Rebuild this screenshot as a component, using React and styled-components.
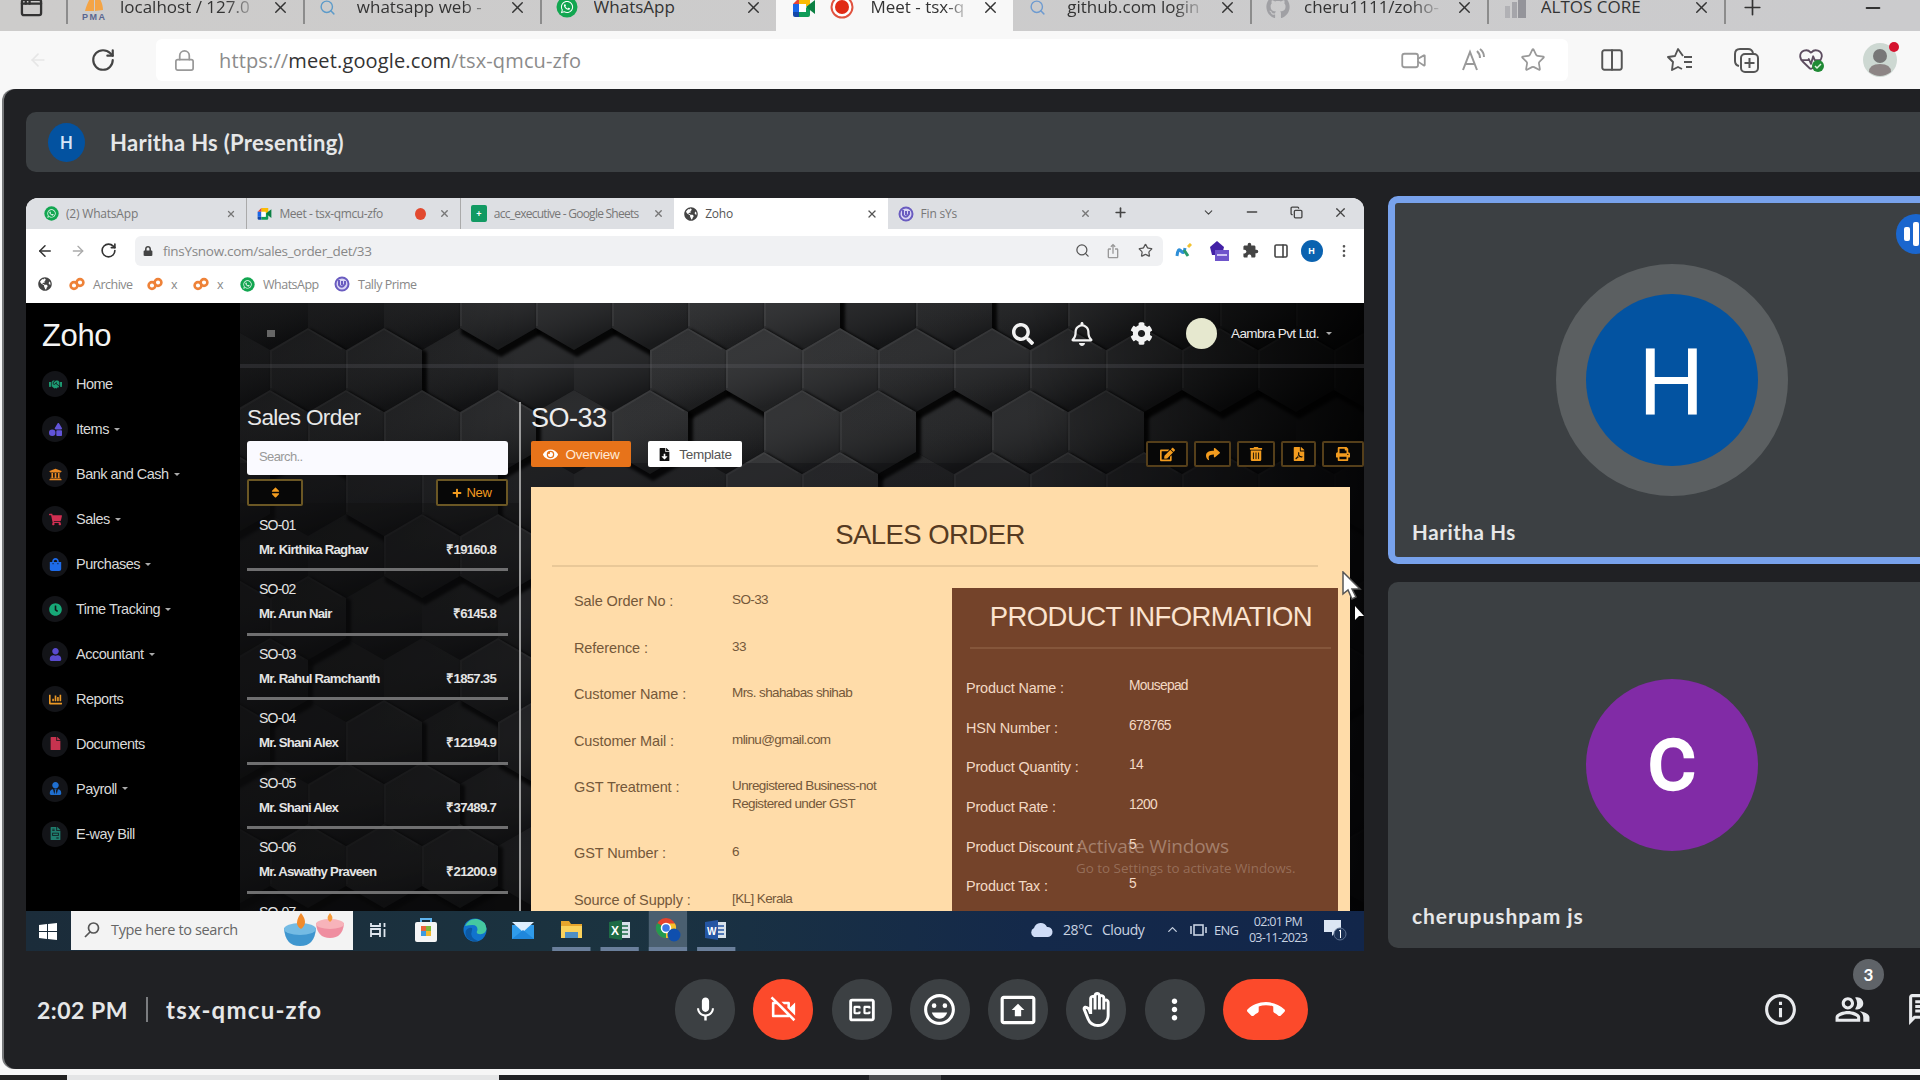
import React from "react";
import styled, { createGlobalStyle, css } from "styled-components";
import {
  MdMic, MdOutlineVideocamOff, MdOutlineClosedCaption, MdOutlineEmojiEmotions,
  MdOutlinePresentToAll, MdOutlineBackHand, MdMoreVert, MdCallEnd, MdInfoOutline,
  MdOutlinePeopleAlt, MdOutlineChat, MdExtension, MdIosShare,
} from "react-icons/md";
import {
  FaSearch, FaRegBell, FaCog, FaEdit, FaShare, FaTrashAlt, FaFilePdf, FaPrint, FaEye,
  FaFileDownload, FaPlus, FaGlobeAmericas, FaWhatsapp, FaLock, FaSort, FaGithub,
  FaHandshake, FaShapes, FaUniversity, FaShoppingCart, FaShoppingBag, FaClock, FaUser,
  FaChartBar, FaFile, FaUserTie, FaFileInvoice,
} from "react-icons/fa";
import {
  ArrowLeft, ArrowRight, RotateCw, Lock, X, Plus, Minus, Star, Video, Search,
  Columns2, PanelRight, ChevronDown, ChevronUp, Copy, HeartPulse, EllipsisVertical, AppWindow,
} from "lucide-react";

const Global = createGlobalStyle`
  * { box-sizing: border-box; }
  body { margin: 0; width: 1920px; height: 1080px; overflow: hidden; background: #fff; }
  svg { display: block; flex: none; }
`;

const ui = '"Open Sans", "Noto Sans", sans-serif';
const meet = 'Lato, "Open Sans", sans-serif';
const arial = '"Liberation Sans", Arial, sans-serif';

const Screen = styled.div`
  width: 1920px; height: 1080px; overflow: hidden; display: flex; flex-direction: column;
  background: #f8f8f8; font-family: ${ui};
`;

/* ---------- outer browser ---------- */
const TabStrip = styled.div`
  height: 31px; flex: none; display: flex; background: linear-gradient(90deg, #cdcccb, #cbcbcd);
`;
const PinnedSlot = styled.div`
  width: 66px; height: 15px; flex: none; display: flex; align-items: center; padding-left: 20px; color: #333;
`;
const Tab = styled.div`
  width: 236.8px; flex: none; height: 31px; padding: 0 13px 17px 16px; display: flex; align-items: center;
  ${(p) => p.$active
    ? css`background: #f8f8f8;`
    : css`background: linear-gradient(#8c8c8c, #8c8c8c) left top / 2px 24px no-repeat;`}
  ${(p) => p.$plain && css`background: none;`}
`;
const TabIcon = styled.div`
  width: ${(p) => p.$w || 38}px; flex: none; display: flex; gap: 14px; align-items: center;
`;
const TabTitle = styled.div`
  flex: 1; overflow: hidden; white-space: nowrap; font-size: 17px; line-height: 26px; color: #333;
  ${(p) => p.$fade && css`mask-image: linear-gradient(90deg, #000 75%, transparent 100%);`}
  margin-right: 10px;
`;
const StripTools = styled.div`
  height: 24px; padding: 0 36px 9px 14px; flex: 1; display: flex; align-items: center; justify-content: space-between;
  color: #333; border-left: 2px solid #8c8c8c;
`;
const Toolbar = styled.div`
  height: 58px; flex: none; display: flex; align-items: center; background: #f8f8f8; padding-left: 26px;
`;
const ToolSlot = styled.div`
  width: ${(p) => p.$w}px; flex: none; display: flex; justify-content: center; color: ${(p) => p.$c || "#555"};
`;
const Address = styled.div`
  width: 1412px; height: 42px; flex: none; border-radius: 6px; background: #fff; display: flex; align-items: center;
  padding: 0 6px 0 17px; color: #999;
`;
const Url = styled.div`
  flex: 1; margin-left: 23px; font-size: 20px; letter-spacing: 0.14px; color: #8b8b8b;
  b { font-weight: 400; color: #333; }
`;
const Profile = styled.div`
  width: 34px; height: 34px; border-radius: 50%; background: #cdd8d2; display: grid; place-items: center; position: relative;
`;
const AlertDot = styled.i`
  position: absolute; right: -2px; top: -1px; width: 10px; height: 10px; border-radius: 50%; background: #d5132f;
`;

/* ---------- meeting ---------- */
const Meeting = styled.div`
  margin-left: 4px; height: 980px; flex: none; background: #202124; border-radius: 12px 0 0 12px;
  display: flex; flex-direction: column; box-shadow: -2px 0 0 #77797b; overflow: hidden;
`;
const PresenterBar = styled.div`
  margin: 23px 0 0 22px; height: 60px; flex: none; background: #3c4043; border-radius: 10px 0 0 10px;
  display: flex; align-items: center; padding-left: 22px; gap: 25px;
`;
const MiniAvatar = styled.div`
  width: 37px; height: 39px; border-radius: 50%; background: #0352a0; color: #d5e5f7; display: grid; place-items: center;
  font: 500 18px Roboto, sans-serif;
`;
const MeetText = styled.div`
  font-family: ${meet}; font-weight: 700; font-size: ${(p) => p.$s || 21}px; color: #e6e7e8;
  letter-spacing: ${(p) => p.$ls || 0}px; white-space: nowrap;
`;
const Stage = styled.div`
  display: flex; gap: 24px; padding: 24px 0 0 22px; height: 779px; flex: none;
`;
const Tiles = styled.div`display: flex; flex-direction: column; gap: 18px; width: 567px; flex: none;`;
const Tile = styled.div`
  height: ${(p) => (p.$speaking ? 368 : 366)}px; background: #3c4043; border-radius: 10px; position: relative;
  border: ${(p) => (p.$speaking ? "7px solid #78a2ec" : "0")};
  display: grid; place-items: center;
`;
const Ring = styled.div`
  width: 232px; height: 232px; border-radius: 50%; display: grid; place-items: center;
  background: ${(p) => (p.$on ? "#5b5f61" : "transparent")};
`;
const Avatar = styled.div`
  width: 172px; height: 172px; border-radius: 50%; background: ${(p) => p.$c}; color: #fff; text-align: center;
  padding-top: ${(p) => p.$top}px; font: 400 93px/110px Roboto, sans-serif; -webkit-text-stroke: ${(p) => p.$stroke || 0}px #fff;
`;
const NameTag = styled.div`
  position: absolute; left: ${(p) => p.$x}px; bottom: ${(p) => p.$b}px;
`;
const AudioBadge = styled.div`
  position: absolute; left: 501px; top: 11px; width: 40px; height: 40px; border-radius: 50%; background: #1a66ce;
  display: flex; align-items: center; padding-left: 8px; gap: 3px;
`;
const Bar = styled.i`width: 6px; height: ${(p) => p.$h}px; border-radius: 2px; background: #fff;`;

const Footer = styled.div`height: 117px; margin-bottom: 1px; flex: none; display: flex; align-items: center; padding-left: 33px;`;
const ClockText = styled.div`width: 638px; flex: none; display: flex; align-items: center;`;
const Divider = styled.i`width: 2px; height: 25px; background: #7b7d80; margin: 0 18px 0 18px;`;
const Controls = styled.div`display: flex; gap: 18.3px; width: 1087px; flex: none; align-items: center;`;
const Control = styled.div`
  width: ${(p) => (p.$wide ? 85 : 60)}px; height: 61px; border-radius: 31px; display: grid; place-items: center; color: #fff;
  background: ${(p) => (p.$red ? "#fc4a2b" : "#3c4043")};
`;
const SideTools = styled.div`display: flex; gap: 35px; color: #e8eaed; width: 200px; flex: none;`;
const Counted = styled.div`position: relative;`;
const Count = styled.div`
  position: absolute; left: 19px; top: -32px; width: 31px; height: 31px; border-radius: 50%; background: #5f6368; color: #fff;
  display: grid; place-items: center; font: 700 17px ${meet};
`;
const BottomEdge = styled.div`height: 11px; flex: none; padding-top: 6px; background: #f6f6f6; display: flex;`;
const Edge = styled.i`width: ${(p) => p.$w}px; height: 5px; background: ${(p) => p.$c};`;

/* ---------- shared screen ---------- */
const Shared = styled.div`
  margin-top: 2px; width: 1338px; height: 753px; flex: none; border-radius: 12px 12px 0 0; overflow: hidden;
  display: flex; flex-direction: column; background: #fff; position: relative;
`;
const InnerTabs = styled.div`height: 31px; flex: none; display: flex; background: #dddfe3; padding-left: 8px; color: #444;`;
const InnerTab = styled.div`
  width: 213.4px; flex: none; display: flex; align-items: center; padding: 0 10px; gap: 7px; font-size: 12px; color: #777;
  ${(p) => p.$active && css`background: #fff; color: #555;`}
  ${(p) => p.$sep && css`border-right: 1px solid #aaa;`}
  span { flex: 1; overflow: hidden; white-space: nowrap; letter-spacing: ${(p) => p.$ls || -0.2}px; }
`;
const TabDot = styled.i`width: 11px; height: 12px; border-radius: 50%; background: #e2492f; margin-right: 6px;`;
const WindowTools = styled.div`flex: 1; display: flex; align-items: center; justify-content: space-between; padding: 0 16px 3px 12px;`;
const InnerNav = styled.div`height: 43px; flex: none; display: flex; align-items: center; color: #555;`;
const InnerAddress = styled.div`
  width: 1028px; height: 30px; border-radius: 6px; background: #f0f1f3; margin-left: 9px; display: flex; align-items: center;
  padding: 0 2px 0 8px; font-size: 13.500px; color: #888;
  span { flex: 1; margin-left: 10px; letter-spacing: -0.3px; }
`;
const Bookmarks = styled.div`
  height: 31px; flex: none; display: flex; align-items: center; padding: 0 0 7px 12px; font-size: 12.500px; color: #888;
`;
const Mark = styled.div`display: flex; align-items: center; gap: 8px; width: ${(p) => p.$w}px; letter-spacing: -0.5px; white-space: nowrap;`;
const Blob = styled.i`
  width: ${(p) => p.$w || 14}px; height: ${(p) => p.$h || 14}px; flex: none; border-radius: ${(p) => p.$r || "50%"};
  background: ${(p) => p.$c}; display: grid; place-items: center; color: #fff; font: 700 9px ${arial};
`;

const AppArea = styled.div`height: 608px; flex: none; display: flex; background: #000;`;
const Sidebar = styled.div`width: 214px; flex: none; background: #000; padding: 16px 0 0 13px; color: #ddd;`;
const Brand = styled.div`font: 400 31px/34px ${arial}; color: #f4f4f4; letter-spacing: -0.4px; margin: 0 0 9px 3px;`;
const MenuItem = styled.div`display: flex; align-items: center; height: 44.95px; font: 400 14.500px ${arial}; letter-spacing: -0.5px; color: #d9d9d9;`;
const MenuIcon = styled.div`
  width: 26px; height: 26px; border-radius: 50%; background: #131418; color: ${(p) => p.$c}; display: grid; place-items: center;
  margin: 0 8px 0 3px;
`;
const Caret = styled.i`
  width: 0; height: 0; margin-left: ${(p) => p.$m || 5}px; border: 3px solid transparent; border-top: 3px solid #aaa; border-bottom: 0;
`;
const MainArea = styled.div`
  width: 1124px; flex: none; display: grid; grid-template: 608px / 1124px; overflow: hidden;
  > * { grid-area: 1 / 1; }
`;
const MainContent = styled.div`display: flex; flex-direction: column;`;
const TopNav = styled.div`
  height: 65px; flex: none; border-bottom: 4px solid rgba(110, 110, 118, 0.22); display: flex; align-items: center;
  padding: 0 32px 0 27px; color: #f2f2f2;
`;
const Burger = styled.i`width: 8px; height: 7px; background: #666; margin-right: auto;`;
const NavSlot = styled.div`width: 59.5px; display: grid; place-items: center;`;
const Company = styled.div`width: 87px; font: 400 13.500px ${arial}; letter-spacing: -0.6px; color: #e9e9e9; white-space: nowrap;`;
const Panes = styled.div`display: flex; height: 543px;`;
const ListPane = styled.div`width: 279px; flex: none; padding: 33px 11px 0 7px; overflow: hidden;`;
const PaneTitle = styled.div`font: 400 22.500px/34px ${arial}; letter-spacing: -0.6px; color: #e8e8e8; height: 40px;`;
const SearchBox = styled.div`
  height: 34px; background: #fafaff; border-radius: 3px; font: 400 13px/32px ${arial}; letter-spacing: -0.6px; color: #999; padding-left: 12px;
`;
const Row = styled.div`display: flex; justify-content: space-between;`;
const ListButtons = styled(Row)`padding-top: 4px; height: 32px;`;
const OutlineButton = styled.div`
  width: ${(p) => p.$w}px; height: 27px; border: 2px solid #6b5724; background: #070707; color: #f39c1f; border-radius: 2px;
  display: flex; align-items: center; justify-content: center; gap: 4px; font: 400 13px ${arial}; letter-spacing: -0.3px;
`;
const Order = styled.div`
  height: 64.45px; padding: 8px 12px 0; border-bottom: 3px solid #6f6f70; color: #e4e4e4; font: 700 13.200px/20px ${arial};
  letter-spacing: -0.75px;
`;
const OrderNo = styled.div`font-weight: 400; font-size: 14px; letter-spacing: -0.8px; height: 25px;`;
const DetailPane = styled.div`
  width: 845px; flex: none; margin-top: 34px; height: 509px; border-left: 2px solid #9b9b9b; padding: 0 0 0 10px; display: flex; flex-direction: column;
`;
const OrderTitle = styled.div`font: 400 27px/32px ${arial}; color: #eee; letter-spacing: -0.5px; height: 39px;`;
const Actions = styled.div`display: flex; height: 46px; align-items: flex-start;`;
const PillButton = styled.div`
  height: 26px; width: ${(p) => p.$w}px; background: ${(p) => p.$bg}; color: ${(p) => p.$c}; border-radius: 2px; margin-right: 17px;
  display: flex; align-items: center; justify-content: center; gap: 8px; font: 400 13.500px ${arial}; letter-spacing: -0.3px;
`;
const Tools = styled.div`display: flex; gap: 6px; margin-left: auto;`;
const Tool = styled(OutlineButton)`height: 26px; border-color: #553f1a;`;
const Sheet = styled.div`width: 819px; height: 424px; background: #ffdca9; padding: 0 12px 0 21px; overflow: hidden;`;
const SheetTitle = styled.div`
  height: 80px; border-bottom: 2px solid #e9c898; margin-right: 20px; padding: 28px 10px 0 0; text-align: center; white-space: nowrap;
  font: 400 27.500px/40px ${arial}; letter-spacing: -0.55px; color: #553a22;
`;
const SheetBody = styled.div`display: flex; justify-content: space-between; padding-top: 21px;`;
const Facts = styled.div`width: 380px; font: 400 14.500px/18px ${arial}; color: #74583a;`;
const Fact = styled.div`
  display: grid; grid-template-columns: 158px 1fr; padding-left: 22px; height: ${(p) => p.$h || 46.5}px; padding-top: 4px; white-space: pre-line;
  letter-spacing: -0.1px;
  span + span { font-size: 13.500px; letter-spacing: -0.6px; margin-top: -1px; }
`;
const Product = styled.div`width: 386px; height: 323px; flex: none; background: #74432a; padding: 0 7px 0 14px; color: #f3d9c4;`;
const ProductTitle = styled.div`
  height: 61px; border-bottom: 2px solid #85563b; margin: 0 0 16px 4px; padding: 9px 19px 0 0; text-align: right; white-space: nowrap;
  font: 400 27.500px/40px ${arial}; color: #fbe3cf; letter-spacing: -0.6px;
`;
const ProductFact = styled.div`
  display: grid; grid-template-columns: 163px 1fr; height: 39.7px; padding-top: 14px; font: 400 14.400px/18px ${arial}; letter-spacing: -0.15px;
  span + span { font-size: 13.800px; letter-spacing: -0.7px; margin-top: -2px; }
`;
const Watermark = styled.div`
  position: absolute; left: 1050px; top: 635px; color: rgba(214, 190, 175, 0.5); font: 400 19px/26px ${ui}; letter-spacing: -0.2px; white-space: nowrap;
  small { display: block; font-size: 13.400px; line-height: 18px; letter-spacing: 0; color: rgba(214, 190, 175, 0.36); }
`;
const Pointer = styled.svg`position: absolute; left: ${(p) => p.$x}px; top: ${(p) => p.$y}px;`;

const Taskbar = styled.div`
  height: 40px; flex: none; background: linear-gradient(90deg, #1b2c3a 0%, #1b3340 45%, #14294a 75%, #12264a 100%); display: flex; align-items: stretch; color: #dfe6ee;
`;
const Start = styled.div`width: 45px; display: grid; place-items: center; padding-right: 2px;`;
const TaskSearch = styled.div`
  width: 282px; height: 39px; background: #f3f3f3; display: flex; align-items: center; padding: 0 9px 2px 13px; gap: 11px;
  color: #666; font-size: 14.500px; letter-spacing: -0.35px; white-space: nowrap;
  span { flex: 1; }
`;
const Apps = styled.div`display: flex; padding-left: 1px;`;
const TaskApp = styled.div`
  width: 48.300px; display: grid; place-items: center; flex: none; padding-bottom: 3px;
  ${(p) => p.$open && css`box-shadow: inset 0 -4px 0 #6a7f9b; clip-path: inset(0 5px);`}
  ${(p) => p.$focus && css`background: #4a5f70;`}
`;
const Tray = styled.div`
  margin-left: auto; width: 335px; display: flex; align-items: center; font-size: 14px; color: #c9d3e2; letter-spacing: -0.4px; white-space: nowrap;
  padding-bottom: 3px;
`;
const TraySlot = styled.div`
  width: ${(p) => p.$w}px; flex: none; display: flex; align-items: center; justify-content: ${(p) => p.$j || "flex-start"};
  ${(p) => p.$small && css`font-size: 13px; letter-spacing: -0.8px;`}
`;
const TrayClock = styled.div`width: 64px; text-align: center; font-size: 12.500px; line-height: 16px; letter-spacing: -0.7px;`;

/* ---------- drawings ---------- */
function HexWall() {
  const cells = [];
  for (let r = -1; r < 10; r++) {
    for (let c = -1; c < 16; c++) {
      const x = c * 76 + (r % 2 ? 38 : 0) + 30;
      const y = r * 62 + 5;
      const seed = Math.abs(Math.sin(r * 12.9 + c * 78.2) * 43758) % 1;
      const side = Math.max(0.3, 1 - Math.abs(x - 520) / 760);
      const v = Math.round(17 + side * (12 + seed * 14));
      cells.push({ x, y, v, deep: seed < 0.4, key: r + "_" + c });
    }
  }
  cells.sort((a, b) => (b.deep ? 1 : 0) - (a.deep ? 1 : 0));
  return (
    <svg width="1124" height="608">
      <defs>
        <linearGradient id="shade" x1="0" y1="0" x2="0.3" y2="1">
          <stop offset="0" stopColor="#fff" stopOpacity="0.04" />
          <stop offset="1" stopColor="#000" stopOpacity="0.22" />
        </linearGradient>
        <linearGradient id="dim" x1="0" x2="1">
          <stop offset="0" stopColor="#0c0c0d" stopOpacity="0.5" />
          <stop offset="0.25" stopColor="#000" stopOpacity="0" />
          <stop offset="0.7" stopColor="#000" stopOpacity="0.05" />
          <stop offset="0.88" stopColor="#000" stopOpacity="0.6" />
          <stop offset="1" stopColor="#000" stopOpacity="0.9" />
        </linearGradient>
        <filter id="soft"><feGaussianBlur stdDeviation="1.6" /></filter>
      </defs>
      <rect width="1124" height="608" fill="#0b0b0c" />
      {cells.map((h) => (
        <g key={h.key} transform={`translate(${h.x} ${h.y})`}>
          {!h.deep && <path d="M0-44L40-21V23L0 46L-40 23V-21Z" fill="#020203" transform="translate(3 3)" filter="url(#soft)" opacity="0.85" />}
          <path d="M0-42L38-20V20L0 42L-38 20V-20Z" fill={`rgb(${h.v},${h.v + 1},${h.v + 3})`} />
          <path d="M0-42L38-20V20L0 42L-38 20V-20Z" fill="url(#shade)" />
          {!h.deep && <path d="M-37 18V-19L0-41L34-21" fill="none" stroke="#fff" strokeOpacity="0.05" strokeWidth="2" />}
        </g>
      ))}
      <rect width="1124" height="608" fill="url(#dim)" />
      <rect width="1124" height="448" y="160" fill="#0a0a0c" fillOpacity="0.3" />
      <rect width="281" height="408" y="200" fill="#0d0d0f" fillOpacity="0.35" />
    </svg>
  );
}

const PhpIcon = () => (
  <svg width="24" height="28" viewBox="0 0 24 28">
    <path d="M3 18C5 10 9 3 12 0v18zM13 0c5 4 8 11 8 17l-8 1z" fill="#f4a445" />
    <text x="0" y="27" fontSize="9" fontWeight="700" fontFamily="Liberation Sans, sans-serif" fill="#5a6690" textLength="23">PMA</text>
  </svg>
);
const MeetIcon = ({ s = 24 }) => (
  <svg width={s} height={s} viewBox="0 0 24 24">
    <path d="M7 3h11v7l-5 2-6-3z" fill="#fbbc04" /><path d="M7 3v6H1z" fill="#ea4335" />
    <path d="M1 9h6v8H1z" fill="#1a66e8" /><path d="M1 17h6v5H3q-2 0-2-2z" fill="#1447a8" />
    <path d="M7 17h7v-4l4-3v10q0 2-2 2H7z" fill="#0f9d58" /><path d="M14 12l9-7v14z" fill="#0b8043" />
    <path d="M7 9h7v8H7z" fill="#fff" />
  </svg>
);
const RecordIcon = () => (
  <svg width="24" height="24"><circle cx="12" cy="12" r="10.5" fill="#fff" stroke="#e0523f" strokeWidth="2" /><circle cx="12" cy="12" r="7" fill="#e12a14" /></svg>
);
const Wa = ({ s = 22 }) => (
  <svg width={s} height={s} viewBox="0 0 22 22"><circle cx="11" cy="11" r="10.5" fill="#12a650" /><g transform="translate(4 4)"><FaWhatsapp size={14} color="#fff" /></g></svg>
);
const BarsIcon = () => (
  <svg width="24" height="26"><path d="M2 12h5v12H2z" fill="#b1b1b5" /><path d="M9 8h5v16H9z" fill="#a5a5aa" /><path d="M15 0h8v24h-8z" fill="#94949a" /></svg>
);
const ReadAloud = () => (
  <svg width="26" height="24" fill="none" stroke="#999" strokeWidth="2"><path d="M3 22L10 4l7 18M6 16h8M17 3q3 3 3 7M20 1q4 3 4 8" /></svg>
);
const Swirl = () => (
  <svg width="16" height="16" fill="none" stroke="#6a5cc0" strokeWidth="2"><circle cx="8" cy="8" r="6.5" fill="#d9d5f3" /><path d="M5 4v5q3 4 6-1V5M8 5v4" /></svg>
);
const LinkMark = () => (
  <svg width="16" height="14" fill="none" stroke="#ee8238" strokeWidth="2.6"><circle cx="5" cy="8.5" r="3.4" /><circle cx="11" cy="5.5" r="3.4" /></svg>
);
const WinLogo = () => (
  <svg width="18" height="17" fill="#fff"><path d="M0 2l8-1v7H0zM9 1l9-1v8H9zM0 9h8v7l-8-1zM9 9h9v8l-9-1z" /></svg>
);
const Bowls = () => (
  <svg width="60" height="34" viewBox="0 0 60 34">
    <path d="M32 10h28q-1 15-14 15T32 10z" fill="#ef8ea0" /><ellipse cx="46" cy="11" rx="14" ry="5" fill="#f7b3ba" />
    <path d="M46 0q5 6 0 9q-5-3 0-9z" fill="#f59b3a" />
    <path d="M0 15h32q-1 18-16 18T0 15z" fill="#3f96cf" /><ellipse cx="16" cy="16" rx="16" ry="6" fill="#74bbe4" />
    <path d="M17 0q8 10 0 16q-8-5 0-16z" fill="#f28b2c" />
  </svg>
);
const TaskView = () => (
  <svg width="17" height="16" fill="none" stroke="#dfe6ee" strokeWidth="1.8"><path d="M1 1v3h9V1M1 15v-3M10 15v-3M1 7h9v5H1zM14.500 1v4M14.500 7v8" /></svg>
);
const Store = () => (
  <svg width="24" height="26"><path d="M7 7V2h10v5" fill="none" stroke="#5fb4ef" strokeWidth="2" /><rect x="1" y="5" width="22" height="20" rx="2" fill="#f5f5f5" /><path d="M7 9h5v5H7z" fill="#e9643b" /><path d="M12 9h5v5h-5z" fill="#7eb83c" /><path d="M7 14h5v5H7z" fill="#3d9be0" /><path d="M12 14h5v5h-5z" fill="#f2b92c" /></svg>
);
const EdgeLogo = () => (
  <svg width="24" height="24"><circle cx="12" cy="12" r="11.5" fill="#1173cd" /><path d="M2 8Q6 0 14 1q9 2 9.500 10q-1 6-8 5q-3-1-1-4q0-5-5-5q-4 0-7.500 1z" fill="#45c9a0" /><path d="M9 12q-3 8 6 11q-9 1-12-5q-2-6 3-8q4-1 3 2z" fill="#0c59a4" /></svg>
);
const Mail = () => (
  <svg width="24" height="20"><path d="M1 5h22v14H1z" fill="#2f9bea" /><path d="M1 2h22L12 12z" fill="#dff0ff" /><path d="M1 19L12 10l11 9z" fill="#1f87dc" /></svg>
);
const Folder = () => (
  <svg width="23" height="19"><path d="M1 1h8l2 3h11v14H1z" fill="#e7a52c" /><path d="M1 6h21v12H1z" fill="#fbd25c" /><path d="M5 12h13v6H5z" fill="#4f8fc4" /></svg>
);
const OfficeIcon = ({ c, t }) => (
  <svg width="22" height="20"><rect x="10" y="2" width="11" height="16" fill="#d8e2ea" /><path d="M13 6h6M13 10h6M13 14h6" stroke={c} strokeWidth="1.500" /><path d="M0 2l13-2v20L0 18z" fill={c} /><text x="2" y="15" fontSize={t === "W" ? 10 : 12} fontWeight="700" fontFamily="Liberation Sans, sans-serif" fill="#fff">{t}</text></svg>
);
const Chrome = () => (
  <svg width="26" height="26" viewBox="0 0 26 26"><circle cx="11" cy="11" r="10" fill="#e5432d" /><path d="M11 11L2.300 6A10 10 0 0 0 11 21z" fill="#239a50" /><path d="M11 11v10A10 10 0 0 0 20 6.500H11z" fill="#f7c22c" /><circle cx="11" cy="11" r="4.500" fill="#3b78e7" stroke="#fff" strokeWidth="1.500" /><circle cx="19" cy="18" r="6.500" fill="#0f4fae" /></svg>
);
const Cloud = () => (
  <svg width="24" height="15"><path d="M5 15a5 5 0 0 1 0-9a7 7 0 0 1 13-1a5 5 0 0 1 1 10z" fill="#cfdcf6" /></svg>
);
const Notice = () => (
  <svg width="24" height="24"><path d="M1 2h17v12h-5l-4 4v-4H1z" fill="#dce6f4" /><circle cx="17" cy="16" r="6" fill="#1a3054" stroke="#5d7090" /><path d="M16 13l1.500-1v8" stroke="#fff" fill="none" /></svg>
);

const outerTabs = [
  { icon: <PhpIcon />, title: "localhost / 127.0", fade: true },
  { icon: <Search size={17} color="#5d9bc9" />, title: "whatsapp web -", fade: true },
  { icon: <Wa />, title: "WhatsApp" },
  { icon: <><MeetIcon /><RecordIcon /></>, title: "Meet - tsx-q", fade: true, active: true, w: 78 },
  { icon: <Search size={17} color="#6e9bd0" />, title: "github.com login", fade: true, plain: true },
  { icon: <FaGithub size={24} color="#a0a0a4" />, title: "cheru1111/zoho-", fade: true },
  { icon: <BarsIcon />, title: "ALTOS CORE" },
];

const menu = [
  ["Home", FaHandshake, "#1d9b72", 0], ["Items", FaShapes, "#6254d8", 1], ["Bank and Cash", FaUniversity, "#ee8a22", 1],
  ["Sales", FaShoppingCart, "#d12f52", 1], ["Purchases", FaShoppingBag, "#1d6bea", 1], ["Time Tracking", FaClock, "#17a877", 1],
  ["Accountant", FaUser, "#5a4bd0", 1], ["Reports", FaChartBar, "#ee9a25", 0], ["Documents", FaFile, "#c7334f", 0],
  ["Payroll", FaUserTie, "#1f6fd0", 1], ["E-way Bill", FaFileInvoice, "#1f7d6e", 0],
];

const orders = [
  ["SO-01", "Mr. Kirthika Raghav", "₹19160.8"], ["SO-02", "Mr. Arun Nair", "₹6145.8"], ["SO-03", "Mr. Rahul Ramchanth", "₹1857.35"],
  ["SO-04", "Mr. Shani Alex", "₹12194.9"], ["SO-05", "Mr. Shani Alex", "₹37489.7"], ["SO-06", "Mr. Aswathy Praveen", "₹21200.9"], ["SO-07", "", ""],
];

const facts = [
  ["Sale Order No :", "SO-33"], ["Reference :", "33"], ["Customer Name :", "Mrs. shahabas shihab"], ["Customer Mail :", "mlinu@gmail.com"],
  ["GST Treatment :", "Unregistered Business-not\nRegistered under GST", 66], ["GST Number :", "6"], ["Source of Supply :", "[KL] Kerala"],
];

const productFacts = [
  ["Product Name :", "Mousepad"], ["HSN Number :", "678765"], ["Product Quantity :", "14"],
  ["Product Rate :", "1200"], ["Product Discount :", "5"], ["Product Tax :", "5"],
];

function OuterBrowser() {
  return (
    <>
      <TabStrip>
        <PinnedSlot><AppWindow size={23} strokeWidth={2.4} /></PinnedSlot>
        {outerTabs.map((t) => (
          <Tab key={t.title} $active={t.active} $plain={t.plain}>
            <TabIcon $w={t.w}>{t.icon}</TabIcon>
            <TabTitle $fade={t.fade}>{t.title}</TabTitle>
            <X size={19} strokeWidth={1.8} color="#333" />
          </Tab>
        ))}
        <StripTools><Plus size={25} strokeWidth={1.6} /><Minus size={22} strokeWidth={2} /></StripTools>
      </TabStrip>
      <Toolbar>
        <ToolSlot $w={24} $c="#e6e6e6"><ArrowLeft size={20} /></ToolSlot>
        <ToolSlot $w={106} $c="#444"><RotateCw size={26} strokeWidth={2} /></ToolSlot>
        <Address>
          <Lock size={23} strokeWidth={1.8} />
          <Url>https://<b>meet.google.com</b>/tsx-qmcu-zfo</Url>
          <ToolSlot $w={60} $c="#999"><Video size={27} strokeWidth={1.6} /></ToolSlot>
          <ToolSlot $w={60}><ReadAloud /></ToolSlot>
          <ToolSlot $w={59} $c="#999"><Star size={26} strokeWidth={1.6} /></ToolSlot>
        </Address>
        <ToolSlot $w={87}><Columns2 size={26} strokeWidth={1.8} /></ToolSlot>
        <ToolSlot $w={50}>
          <svg width="28" height="26" fill="none" stroke="#555" strokeWidth="1.900" strokeLinejoin="round"><path d="M17 9L12 2L9 9L2 10L7 15L6 23L12 20L16 22M18 10h8M18 15h8M20 20h6" /></svg>
        </ToolSlot>
        <ToolSlot $w={82}>
          <svg width="27" height="27" fill="none" stroke="#555" strokeWidth="2"><path d="M6 19q-4-1-4-5V7q0-5 5-5h8q4 0 5 4" /><rect x="8" y="7" width="17" height="18" rx="4" /><path d="M16.500 11v10M11.500 16h10" /></svg>
        </ToolSlot>
        <ToolSlot $w={51}>
          <svg width="29" height="29"><HeartPulse size={26} strokeWidth={1.7} color="#5d4d60" /><circle cx="20" cy="20" r="6" fill="#208a35" /><path d="M17 20l2 2 4-4" stroke="#dff3e0" fill="none" strokeWidth="1.500" /></svg>
        </ToolSlot>
        <ToolSlot $w={84}>
          <Profile>
            <svg width="34" height="34"><circle cx="17" cy="13" r="7" fill="#777" /><path d="M6 29q0-8 11-8t11 8q-11 8-22 0z" fill="#8d8585" /></svg>
            <AlertDot />
          </Profile>
        </ToolSlot>
      </Toolbar>
    </>
  );
}

function InnerBrowser() {
  return (
    <>
      <InnerTabs>
        <InnerTab $sep><Wa s={15} /><span>(2) WhatsApp</span><X size={10} strokeWidth={3} /></InnerTab>
        <InnerTab $sep $ls={-0.4}><MeetIcon s={15} /><span>Meet - tsx-qmcu-zfo</span><TabDot /><X size={11} strokeWidth={3} /></InnerTab>
        <InnerTab $ls={-0.75}><Blob $c="#129a63" $r="2px" $w={16} $h={17}>+</Blob><span>acc_executive - Google Sheets</span><X size={11} strokeWidth={3} /></InnerTab>
        <InnerTab $active><FaGlobeAmericas size={14} color="#444" /><span>Zoho</span><X size={12} strokeWidth={2.6} /></InnerTab>
        <InnerTab><Swirl /><span>Fin sYs</span><X size={11} strokeWidth={3} /></InnerTab>
        <WindowTools>
          <Plus size={15} strokeWidth={2.6} />
          <ToolSlot $w={14} />
          <ChevronDown size={13} /><Minus size={16} /><Copy size={13} strokeWidth={2.4} /><X size={15} />
        </WindowTools>
      </InnerTabs>
      <InnerNav>
        <ToolSlot $w={38} $c="#333"><ArrowLeft size={18} /></ToolSlot>
        <ToolSlot $w={27} $c="#aaa"><ArrowRight size={16} /></ToolSlot>
        <ToolSlot $w={35} $c="#333"><RotateCw size={17} strokeWidth={2.3} /></ToolSlot>
        <InnerAddress>
          <FaLock size={10} color="#444" />
          <span>finsYsnow.com/sales_order_det/33</span>
          <ToolSlot $w={30}><Search size={15} /></ToolSlot>
          <ToolSlot $w={32}><MdIosShare size={16} color="#999" /></ToolSlot>
          <ToolSlot $w={32}><Star size={15} /></ToolSlot>
        </InnerAddress>
        <ToolSlot $w={40}>
          <svg width="17" height="15" fill="none" strokeWidth="3"><path d="M2 13q1-9 4-5t4-3" stroke="#2f8fd8" /><path d="M9 7l4 6" stroke="#2a9a6b" /><path d="M13 4l3-3" stroke="#f2c230" /></svg>
        </ToolSlot>
        <ToolSlot $w={32}>
          <svg width="20" height="22"><path d="M1 7L8 1l7 6-2 8H3z" fill="#4321a6" /><rect x="6" y="10" width="14" height="11" fill="#6f55cb" /><path d="M8 15h10" stroke="#cfc4f5" strokeWidth="2" /></svg>
        </ToolSlot>
        <ToolSlot $w={30} $c="#444"><MdExtension size={17} /></ToolSlot>
        <ToolSlot $w={31} $c="#444"><PanelRight size={16} strokeWidth={2.4} /></ToolSlot>
        <ToolSlot $w={31}><Blob $c="#0a62b0" $w={22} $h={22}>H</Blob></ToolSlot>
        <ToolSlot $w={33}><EllipsisVertical size={16} /></ToolSlot>
      </InnerNav>
      <Bookmarks>
        <Mark $w={31}><FaGlobeAmericas size={14} color="#444" /></Mark>
        <Mark $w={78}><LinkMark />Archive</Mark>
        <Mark $w={46}><LinkMark />x</Mark>
        <Mark $w={47}><LinkMark />x</Mark>
        <Mark $w={94}><Wa s={15} />WhatsApp</Mark>
        <Mark $w={100}><Swirl />Tally Prime</Mark>
      </Bookmarks>
    </>
  );
}

function SalesApp() {
  return (
    <AppArea>
      <Sidebar>
        <Brand>Zoho</Brand>
        {menu.map(([label, Icon, c, more]) => (
          <MenuItem key={label}><MenuIcon $c={c}><Icon size={13} /></MenuIcon>{label}{more ? <Caret /> : null}</MenuItem>
        ))}
      </Sidebar>
      <MainArea>
        <HexWall />
        <MainContent>
          <TopNav>
            <Burger />
            <NavSlot><FaSearch size={22} /></NavSlot>
            <NavSlot><FaRegBell size={24} /></NavSlot>
            <NavSlot><FaCog size={23} /></NavSlot>
            <NavSlot><Blob $c="#e6e8cf" $w={31} $h={31} /></NavSlot>
            <Company>Aambra Pvt Ltd.</Company>
            <Caret $m={8} />
          </TopNav>
          <Panes>
            <ListPane>
              <PaneTitle>Sales Order</PaneTitle>
              <SearchBox>Search..</SearchBox>
              <ListButtons>
                <OutlineButton $w={56}><FaSort size={13} /></OutlineButton>
                <OutlineButton $w={72}><FaPlus size={10} />New</OutlineButton>
              </ListButtons>
              {orders.map(([no, who, sum]) => (
                <Order key={no}><OrderNo>{no}</OrderNo><Row><span>{who}</span><span>{sum}</span></Row></Order>
              ))}
            </ListPane>
            <DetailPane>
              <OrderTitle>SO-33</OrderTitle>
              <Actions>
                <PillButton $w={100} $bg="#e7731a" $c="#ffe9d6"><FaEye size={15} color="#fff" />Overview</PillButton>
                <PillButton $w={94} $bg="#fff" $c="#555"><FaFileDownload size={13} color="#111" />Template</PillButton>
                <Tools>
                  <Tool $w={42}><FaEdit size={15} /></Tool>
                  <Tool $w={37}><FaShare size={14} /></Tool>
                  <Tool $w={38}><FaTrashAlt size={14} /></Tool>
                  <Tool $w={35}><FaFilePdf size={14} /></Tool>
                  <Tool $w={42}><FaPrint size={14} /></Tool>
                </Tools>
              </Actions>
              <Sheet>
                <SheetTitle>SALES ORDER</SheetTitle>
                <SheetBody>
                  <Facts>
                    {facts.map(([k, v, h]) => <Fact key={k} $h={h}><span>{k}</span><span>{v}</span></Fact>)}
                  </Facts>
                  <Product>
                    <ProductTitle>PRODUCT INFORMATION</ProductTitle>
                    {productFacts.map(([k, v]) => <ProductFact key={k}><span>{k}</span><span>{v}</span></ProductFact>)}
                  </Product>
                </SheetBody>
              </Sheet>
            </DetailPane>
          </Panes>
        </MainContent>
      </MainArea>
    </AppArea>
  );
}

function WindowsTaskbar() {
  return (
    <Taskbar>
      <Start><WinLogo /></Start>
      <TaskSearch><svg width="16" height="16" fill="none" stroke="#555" strokeWidth="1.700"><circle cx="9.500" cy="6" r="5" /><path d="M6 10l-5 5" /></svg><span>Type here to search</span><Bowls /></TaskSearch>
      <Apps>
        <TaskApp><TaskView /></TaskApp>
        <TaskApp><Store /></TaskApp>
        <TaskApp><EdgeLogo /></TaskApp>
        <TaskApp><Mail /></TaskApp>
        <TaskApp $open><Folder /></TaskApp>
        <TaskApp $open><OfficeIcon c="#1d6b45" t="X" /></TaskApp>
        <TaskApp $open $focus><Chrome /></TaskApp>
        <TaskApp $open><OfficeIcon c="#2556a3" t="W" /></TaskApp>
      </Apps>
      <Tray>
        <TraySlot $w={34}><Cloud /></TraySlot>
        <TraySlot $w={102}>28°C&nbsp;&nbsp; Cloudy</TraySlot>
        <TraySlot $w={25}><ChevronUp size={15} /></TraySlot>
        <TraySlot $w={24}><svg width="17" height="12" fill="none" stroke="#c9d3e2" strokeWidth="1.600"><rect x="4" y="1" width="9" height="10" /><path d="M1 2v8M16 3v6" /></svg></TraySlot>
        <TraySlot $w={32} $small>ENG</TraySlot>
        <TrayClock>02:01 PM<br />03-11-2023</TrayClock>
        <TraySlot $w={50} $j="center"><Notice /></TraySlot>
      </Tray>
    </Taskbar>
  );
}

export default function App() {
  return (
    <Screen>
      <Global />
      <OuterBrowser />
      <Meeting>
        <PresenterBar><MiniAvatar>H</MiniAvatar><MeetText $s={22} $ls={0.3}>Haritha Hs (Presenting)</MeetText></PresenterBar>
        <Stage>
          <Shared>
            <InnerBrowser />
            <SalesApp />
            <WindowsTaskbar />
            <Watermark>Activate Windows<small>Go to Settings to activate Windows.</small></Watermark>
            <Pointer $x={1316} $y={373} width="20" height="30" viewBox="0 0 20 30"><path d="M1 1v22l5-4 4 9 4-2-4-8h8z" fill="#fff" stroke="#555" strokeWidth="1.500" /></Pointer>
            <Pointer $x={1328} $y={407} width="10" height="16" viewBox="0 0 10 16"><path d="M1 1v14l4-4h5z" fill="#fff" /></Pointer>
          </Shared>
          <Tiles>
            <Tile $speaking>
              <Ring $on><Avatar $c="#0353a1" $top={35}>H</Avatar></Ring>
              <AudioBadge><Bar $h={14} /><Bar $h={24} /><Bar $h={14} /></AudioBadge>
              <NameTag $x={17} $b={13}><MeetText $s={20.5} $ls={0.6}>Haritha Hs</MeetText></NameTag>
            </Tile>
            <Tile>
              <Ring><Avatar $c="#812ba6" $top={24} $stroke={2.5}>c</Avatar></Ring>
              <NameTag $x={24} $b={20}><MeetText $s={21} $ls={0.95}>cherupushpam js</MeetText></NameTag>
            </Tile>
          </Tiles>
        </Stage>
        <Footer>
          <ClockText><MeetText $s={23} $ls={0.5}>2:02 PM</MeetText><Divider /><MeetText $s={24} $ls={1.25}>tsx-qmcu-zfo</MeetText></ClockText>
          <Controls>
            <Control><MdMic size={29} /></Control>
            <Control $red><MdOutlineVideocamOff size={31} /></Control>
            <Control><MdOutlineClosedCaption size={34} /></Control>
            <Control><MdOutlineEmojiEmotions size={37} /></Control>
            <Control><MdOutlinePresentToAll size={38} /></Control>
            <Control><MdOutlineBackHand size={35} /></Control>
            <Control><MdMoreVert size={33} /></Control>
            <Control $red $wide><MdCallEnd size={38} /></Control>
          </Controls>
          <SideTools>
            <MdInfoOutline size={37} />
            <Counted><MdOutlinePeopleAlt size={37} /><Count>3</Count></Counted>
            <MdOutlineChat size={37} />
          </SideTools>
        </Footer>
      </Meeting>
      <BottomEdge><Edge $w={67} $c="#222" /><Edge $w={432} $c="#e4e5e6" /><Edge $w={370} $c="#1f2023" /><Edge $w={72} $c="#4a4b4d" /><Edge $w={979} $c="#1f2023" /></BottomEdge>
    </Screen>
  );
}
